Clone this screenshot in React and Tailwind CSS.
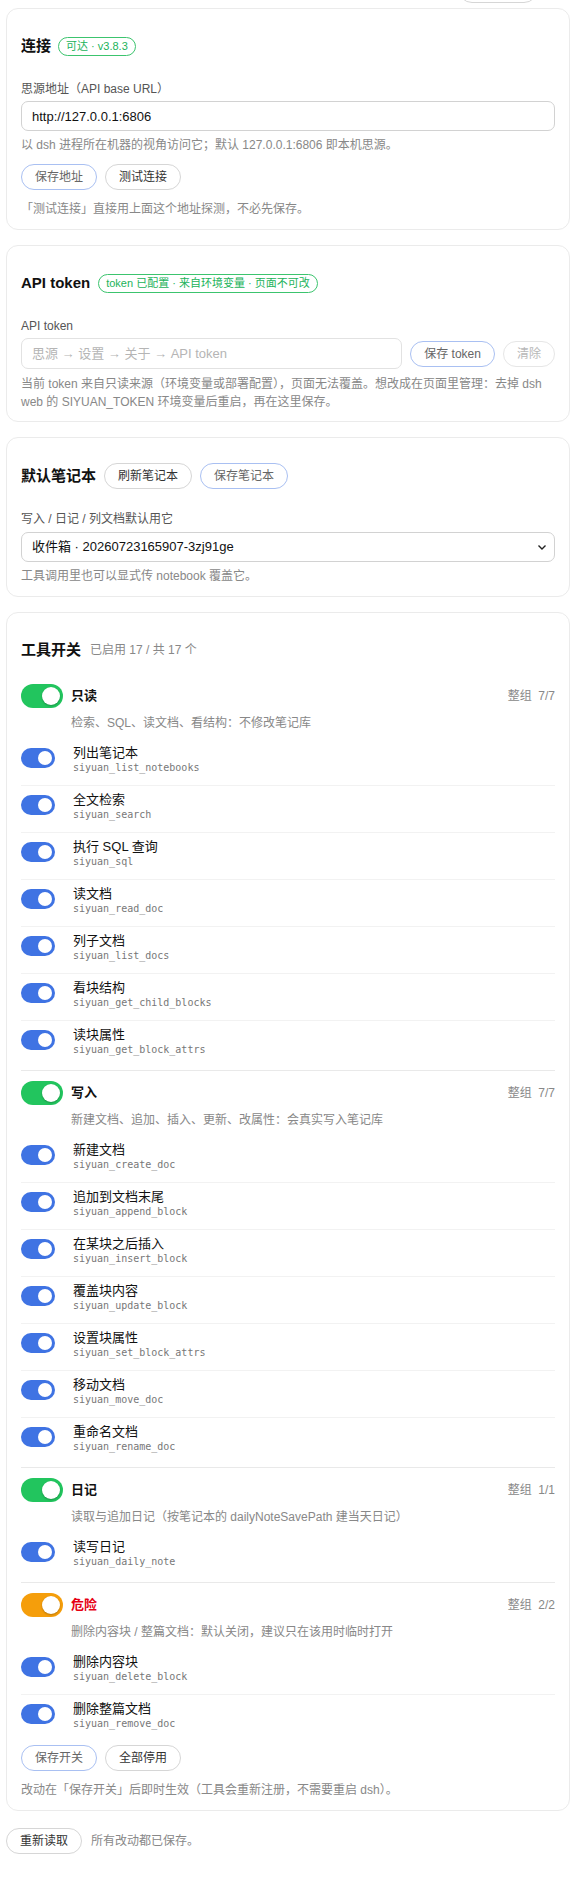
import React from "react";

const font = "font-['Liberation_Sans','Noto_Sans_CJK_SC',sans-serif]";
const cardClassName = "rounded-[12px] border border-[#ebebeb] bg-white pt-[25px] pb-[10px] pl-[14px] pr-[14px]";
const headingClassName = "text-[15px] font-bold text-[#111] leading-[24px]";

const groups = [
  {
    name: "只读",
    count: "7/7",
    desc: "检索、SQL、读文档、看结构：不修改笔记库",
    track: "bg-[#22c55e]",
    tools: [
      ["列出笔记本", "siyuan_list_notebooks"],
      ["全文检索", "siyuan_search"],
      ["执行 SQL 查询", "siyuan_sql"],
      ["读文档", "siyuan_read_doc"],
      ["列子文档", "siyuan_list_docs"],
      ["看块结构", "siyuan_get_child_blocks"],
      ["读块属性", "siyuan_get_block_attrs"],
    ],
  },
  {
    name: "写入",
    count: "7/7",
    desc: "新建文档、追加、插入、更新、改属性：会真实写入笔记库",
    track: "bg-[#22c55e]",
    tools: [
      ["新建文档", "siyuan_create_doc"],
      ["追加到文档末尾", "siyuan_append_block"],
      ["在某块之后插入", "siyuan_insert_block"],
      ["覆盖块内容", "siyuan_update_block"],
      ["设置块属性", "siyuan_set_block_attrs"],
      ["移动文档", "siyuan_move_doc"],
      ["重命名文档", "siyuan_rename_doc"],
    ],
  },
  {
    name: "日记",
    count: "1/1",
    desc: "读取与追加日记（按笔记本的 dailyNoteSavePath 建当天日记）",
    track: "bg-[#22c55e]",
    tools: [["读写日记", "siyuan_daily_note"]],
  },
  {
    name: "危险",
    count: "2/2",
    desc: "删除内容块 / 整篇文档：默认关闭，建议只在该用时临时打开",
    track: "bg-[#f59e0b]",
    danger: true,
    tools: [
      ["删除内容块", "siyuan_delete_block"],
      ["删除整篇文档", "siyuan_remove_doc"],
    ],
  },
];

function Pill({ children, primary, disabled }) {
  const className = [
    "h-[26px] shrink-0 rounded-full border bg-white px-[13px] text-[12px] leading-[24px]",
    primary ? "border-[#a9c0f2] text-[#666]" : "border-[#d6d6d6] text-[#333]",
    disabled ? "border-[#e6e6e6] text-[#b8b8b8]" : "",
  ].join(" ");
  return <button className={className}>{children}</button>;
}

function Badge({ children }) {
  return (
    <span className="inline-flex h-[19px] items-center rounded-full border border-[#3cc46e] px-[7px] text-[11px] text-[#22b35a]">
      {children}
    </span>
  );
}

function GroupSwitch({ track }) {
  return (
    <span className={`flex h-[24px] w-[42px] shrink-0 items-center justify-end rounded-full px-[3px] ${track}`}>
      <span className="h-[18px] w-[18px] rounded-full bg-white shadow-[0_1px_2px_rgba(0,0,0,0.25)]" />
    </span>
  );
}

function ToolSwitch() {
  return (
    <span className="mt-[4px] flex h-[20px] w-[34px] shrink-0 items-center justify-end rounded-full bg-[#3f73e3] px-[3px]">
      <span className="h-[14px] w-[14px] rounded-full bg-white" />
    </span>
  );
}

function ToolRow({ title, name, first }) {
  return (
    <div className={`flex items-start gap-[18px] pt-[5px] pb-[10px] ${first ? "" : "border-t border-[#f2f2f2]"}`}>
      <ToolSwitch />
      <div className="flex flex-col">
        <div className="text-[13px] leading-[17px] text-[#111]">{title}</div>
        <div className="font-['DejaVu_Sans_Mono',monospace] text-[10px] leading-[14px] text-[#777]">{name}</div>
      </div>
    </div>
  );
}

function ToolGroup({ group, first }) {
  return (
    <div className={`pt-[10px] pb-[3px] ${first ? "" : "border-t border-[#e9e9e9]"}`}>
      <div className="flex h-[24px] items-center">
        <GroupSwitch track={group.track} />
        <div className={`ml-[8px] text-[13px] font-bold ${group.danger ? "text-[#e60012]" : "text-[#111]"}`}>{group.name}</div>
        <div className="ml-auto text-[12px] text-[#888]">整组&nbsp;&nbsp;{group.count}</div>
      </div>
      <div className="mt-[6px] mb-[6px] pl-[50px] text-[12px] leading-[19px] text-[#888]">{group.desc}</div>
      {group.tools.map(([title, name], index) => (
        <ToolRow key={name} title={title} name={name} first={index === 0} />
      ))}
    </div>
  );
}

function ConnectionCard() {
  return (
    <section className={cardClassName}>
      <div className="flex h-[24px] items-center gap-[7px]">
        <h3 className={headingClassName}>连接</h3>
        <Badge>可达 · v3.8.3</Badge>
      </div>
      <div className="mt-[22px] text-[12px] leading-[19px] text-[#555]">思源地址（API base URL）</div>
      <input
        className="mt-[2px] h-[30px] w-full rounded-[7px] border border-[#d2d2d2] px-[10px] text-[13px] text-[#111] outline-none"
        defaultValue="http://127.0.0.1:6806"
      />
      <div className="mt-[5px] text-[12px] leading-[19px] text-[#888]">以 dsh 进程所在机器的视角访问它；默认 127.0.0.1:6806 即本机思源。</div>
      <div className="mt-[9px] flex gap-[8px]">
        <Pill primary>保存地址</Pill>
        <Pill>测试连接</Pill>
      </div>
      <div className="mt-[10px] text-[12px] leading-[19px] text-[#888]">「测试连接」直接用上面这个地址探测，不必先保存。</div>
    </section>
  );
}

function TokenCard() {
  return (
    <section className={cardClassName}>
      <div className="flex h-[24px] items-center gap-[8px]">
        <h3 className={headingClassName}>API token</h3>
        <Badge>token 已配置 · 来自环境变量 · 页面不可改</Badge>
      </div>
      <div className="mt-[22px] text-[12px] leading-[19px] text-[#555]">API token</div>
      <div className="mt-[2px] flex items-center gap-[8px]">
        <input
          className="h-[31px] min-w-0 flex-1 rounded-[7px] border border-[#e2e2e2] px-[10px] text-[13px] outline-none placeholder:text-[#b5b5b5]"
          placeholder="思源 → 设置 → 关于 → API token"
        />
        <Pill primary>保存 token</Pill>
        <Pill disabled>清除</Pill>
      </div>
      <p className="mt-[6px] text-[12px] leading-[18px] text-[#888]">
        当前 token 来自只读来源（环境变量或部署配置），页面无法覆盖。想改成在页面里管理：去掉 dsh web 的 SIYUAN_TOKEN 环境变量后重启，再在这里保存。
      </p>
    </section>
  );
}

function NotebookCard() {
  return (
    <section className={cardClassName}>
      <div className="flex h-[26px] items-center gap-[8px]">
        <h3 className={headingClassName}>默认笔记本</h3>
        <Pill>刷新笔记本</Pill>
        <Pill primary>保存笔记本</Pill>
      </div>
      <div className="mt-[21px] text-[12px] leading-[19px] text-[#555]">写入 / 日记 / 列文档默认用它</div>
      <div className="relative mt-[3px]">
        <select className="h-[30px] w-full appearance-none rounded-[7px] border border-[#d2d2d2] bg-white px-[10px] text-[13px] text-[#111] outline-none">
          <option>收件箱 · 20260723165907-3zj91ge</option>
        </select>
        <svg className="pointer-events-none absolute right-[8px] top-[11px]" width="10" height="8" viewBox="0 0 10 8" fill="none">
          <path d="M1.5 2.5 L5 6 L8.5 2.5" stroke="#222" strokeWidth="1.4" />
        </svg>
      </div>
      <div className="mt-[5px] text-[12px] leading-[19px] text-[#888]">工具调用里也可以显式传 notebook 覆盖它。</div>
    </section>
  );
}

function ToolsCard() {
  return (
    <section className={cardClassName}>
      <div className="mb-[12px] flex h-[24px] items-center gap-[9px]">
        <h3 className={headingClassName}>工具开关</h3>
        <span className="text-[12px] text-[#888]">已启用 17 / 共 17 个</span>
      </div>
      {groups.map((group, index) => (
        <ToolGroup key={group.name} group={group} first={index === 0} />
      ))}
      <div className="mt-[1px] flex gap-[8px]">
        <Pill primary>保存开关</Pill>
        <Pill>全部停用</Pill>
      </div>
      <div className="mt-[10px] text-[12px] leading-[19px] text-[#888]">改动在「保存开关」后即时生效（工具会重新注册，不需要重启 dsh）。</div>
    </section>
  );
}

export default function App() {
  return (
    <div className={`min-h-[1877px] bg-white pl-[6px] pr-[3px] ${font}`}>
      {/* bottom edge of the toolbar button scrolled out above */}
      <div className="flex h-[3px] items-end justify-end overflow-hidden pr-[32px]">
        <button className="h-[28px] w-[80px] shrink-0 rounded-full border border-[#d6d6d6] bg-white" />
      </div>
      <div className="mt-[5px] flex flex-col gap-[15px]">
        <ConnectionCard />
        <TokenCard />
        <NotebookCard />
        <ToolsCard />
      </div>
      <div className="mt-[17px] flex items-center gap-[9px]">
        <Pill>重新读取</Pill>
        <span className="text-[12px] text-[#888]">所有改动都已保存。</span>
      </div>
    </div>
  );
}
